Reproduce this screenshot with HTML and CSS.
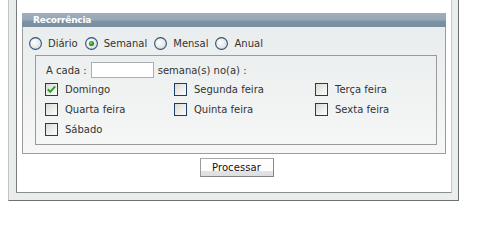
FILE: index.html
```html
<!DOCTYPE html>
<html lang="pt">
<head>
<meta charset="utf-8">
<title>Recorrência</title>
<link rel="stylesheet" href="styles.css">
</head>
<body>
<div class="frame">
  <div class="panel">
    <div class="fieldset">
      <div class="legend">Recorrência</div>
      <div class="radios">
        <label class="opt"><svg class="radio" viewBox="0 0 13 13" width="13" height="13"><defs><radialGradient id="rg" cx="0.4" cy="0.4" r="0.7"><stop offset="0" stop-color="#ffffff"/><stop offset="1" stop-color="#d6d9dc"/></radialGradient></defs><circle cx="6.5" cy="6.5" r="5.9" fill="url(#rg)" stroke="#34526f" stroke-width="1.1"/></svg><span>Diário</span></label>
        <label class="opt"><svg class="radio" viewBox="0 0 13 13" width="13" height="13"><circle cx="6.5" cy="6.5" r="5.9" fill="url(#rg)" stroke="#34526f" stroke-width="1.1"/><circle cx="6.5" cy="6.5" r="2.6" fill="#2f9a2f"/><circle cx="6" cy="6" r="1" fill="#7fd27f"/></svg><span>Semanal</span></label>
        <label class="opt"><svg class="radio" viewBox="0 0 13 13" width="13" height="13"><circle cx="6.5" cy="6.5" r="5.9" fill="url(#rg)" stroke="#34526f" stroke-width="1.1"/></svg><span>Mensal</span></label>
        <label class="opt"><svg class="radio" viewBox="0 0 13 13" width="13" height="13"><circle cx="6.5" cy="6.5" r="5.9" fill="url(#rg)" stroke="#34526f" stroke-width="1.1"/></svg><span>Anual</span></label>
      </div>
      <div class="box">
        <div class="every">
          <span>A cada :</span>
          <span class="field"></span>
          <span>semana(s) no(a) :</span>
        </div>
        <div class="days">
          <label class="day"><svg class="check" viewBox="0 0 13 13" width="13" height="13"><defs><linearGradient id="cg" x1="0" y1="0" x2="1" y2="1"><stop offset="0" stop-color="#d9d9d3"/><stop offset="1" stop-color="#ffffff"/></linearGradient></defs><rect x="0.5" y="0.5" width="12" height="12" fill="url(#cg)" stroke="#1d3e66"/><polyline points="2.8,6.3 5.2,8.8 10.2,3.3" fill="none" stroke="#2e9e2e" stroke-width="2"/></svg><span>Domingo</span></label>
          <label class="day"><svg class="check" viewBox="0 0 13 13" width="13" height="13"><rect x="0.5" y="0.5" width="12" height="12" fill="url(#cg)" stroke="#1d3e66"/></svg><span>Segunda feira</span></label>
          <label class="day"><svg class="check" viewBox="0 0 13 13" width="13" height="13"><rect x="0.5" y="0.5" width="12" height="12" fill="url(#cg)" stroke="#1d3e66"/></svg><span>Terça feira</span></label>
          <label class="day"><svg class="check" viewBox="0 0 13 13" width="13" height="13"><rect x="0.5" y="0.5" width="12" height="12" fill="url(#cg)" stroke="#1d3e66"/></svg><span>Quarta feira</span></label>
          <label class="day"><svg class="check" viewBox="0 0 13 13" width="13" height="13"><rect x="0.5" y="0.5" width="12" height="12" fill="url(#cg)" stroke="#1d3e66"/></svg><span>Quinta feira</span></label>
          <label class="day"><svg class="check" viewBox="0 0 13 13" width="13" height="13"><rect x="0.5" y="0.5" width="12" height="12" fill="url(#cg)" stroke="#1d3e66"/></svg><span>Sexta feira</span></label>
          <label class="day"><svg class="check" viewBox="0 0 13 13" width="13" height="13"><rect x="0.5" y="0.5" width="12" height="12" fill="url(#cg)" stroke="#1d3e66"/></svg><span>Sábado</span></label>
        </div>
      </div>
    </div>
    <div class="actions">
      <button class="btn" type="button">Processar</button>
    </div>
  </div>
</div>
</body>
</html>
```
FILE: styles.css
```css
html, body {
  margin: 0;
  padding: 0;
  background: #ffffff;
}
body {
  font-family: "DejaVu Sans", Verdana, sans-serif;
  font-size: 10px;
  color: #333333;
}
.frame {
  box-sizing: border-box;
  width: 451px;
  height: 201px;
  margin-left: 8px;
  padding: 0 6px 7px 7px;
  background: #e9eded;
  border-left: 1px solid #c2c4c4;
  border-right: 1px solid #6f6f6f;
  border-bottom: 1px solid #6f6f6f;
}
.panel {
  box-sizing: border-box;
  height: 193px;
  padding: 13px 5px 0 5px;
  background: #ffffff;
  border-left: 1px solid #7b7b7b;
  border-right: 1px solid #c6c8c8;
  border-bottom: 1px solid #8e8e8e;
}
.fieldset {
  box-sizing: border-box;
  width: 424px;
  background: linear-gradient(to bottom, #e8ecec 0%, #f6f7f7 100%);
  border: 1px solid #9c9c9c;
  border-top: none;
  padding: 0 0 8px 0;
}
.legend {
  height: 14px;
  line-height: 14px;
  margin: 0 -1px;
  padding-left: 11px;
  background: linear-gradient(to bottom, #9dadbc 0%, #95a7b6 52%, #7f93a6 56%, #7a8ea1 100%);
  color: #ffffff;
  font-weight: bold;
  font-size: 9px;
  letter-spacing: -0.2px;
}
.radios {
  display: flex;
  align-items: center;
  height: 13px;
  margin: 10px 0 5px 6px;
}
.opt {
  display: flex;
  align-items: center;
  gap: 6px;
  margin-right: 7px;
}
.radio, .check {
  display: block;
  flex: none;
}
.box {
  box-sizing: border-box;
  width: 402px;
  margin-left: 12px;
  border: 1px solid #9a9a9a;
  padding: 6px 0 8px 9px;
}
.every {
  display: flex;
  align-items: center;
  height: 16px;
  padding-left: 1px;
}
.field {
  box-sizing: border-box;
  width: 63px;
  height: 16px;
  margin: 0 4px 0 4px;
  background: #ffffff;
  border: 1px solid #a7aeb4;
}
.days {
  display: grid;
  grid-template-columns: 129px 141px auto;
  row-gap: 7px;
  margin-top: 5px;
}
.day {
  display: flex;
  align-items: center;
  gap: 7px;
  height: 13px;
}
.actions {
  display: flex;
  justify-content: center;
  padding-left: 5px;
  margin-top: 4px;
}
.btn {
  box-sizing: border-box;
  width: 74px;
  height: 19px;
  padding: 0;
  margin: 0;
  font-family: "DejaVu Sans", Verdana, sans-serif;
  font-size: 10px;
  letter-spacing: 0.1px;
  color: #111111;
  background: linear-gradient(to bottom, #ffffff 0%, #fdfdfd 68%, #e3e3e3 72%, #dedede 100%);
  border: 1px solid #858585;
  border-top-color: #a9a9a9;
  border-left-color: #9a9a9a;
  border-radius: 0;
}
```
